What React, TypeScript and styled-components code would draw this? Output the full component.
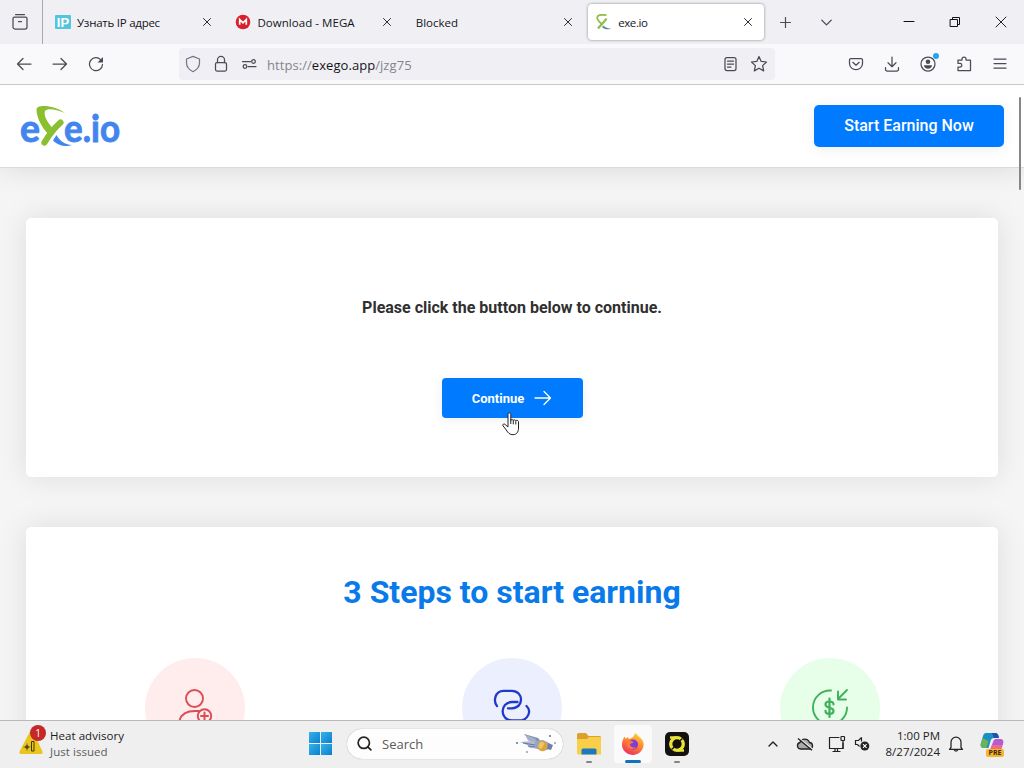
import React from 'react'
import styled, { createGlobalStyle } from 'styled-components';
import { X, ChevronDown, Search, ChevronUp, Plus } from 'lucide-react';


const tabs = [
  { title: 'Узнать IP адрес', icon: 'ip', spacing: '-0.25px' },
  { title: 'Download - MEGA', icon: 'mega', spacing: '0.05px' },
  { title: 'Blocked', icon: '', spacing: '0' },
  { title: 'exe.io', icon: 'exe', spacing: '-0.4px' },
]

const TabIcon = ({ name }: { name: string }) => {
  if (name === 'ip') {
    return (
      <Svg width="16" height="16" viewBox="0 0 16 16">
        <rect y="1" width="16" height="14" rx="1" fill="#55c5dc" />
        <text x="8" y="12.500" fontSize="13" fontWeight="700" fontFamily="Liberation Sans" fill="#fff" textAnchor="middle">IP</text>
      </Svg>
    )
  }
  if (name === 'mega') {
    return (
      <Svg width="16" height="16" viewBox="0 0 16 16">
        <circle cx="8" cy="8" r="7.300" fill="#d9202c" />
        <path d="M4.7 10.8V5.5L8 8.8l3.3-3.3v5.3" fill="none" stroke="#fff" strokeWidth="1.7" />
      </Svg>
    )
  }
  return (
    <Svg width="16" height="16" viewBox="0 0 16 16">
      <path d="M10.5 1.2C5 .2.5 1 1.3 4.2c.5 2.2 2.8 4.500 5.200 6.300" fill="none" stroke="#8fbd45" strokeWidth="1.7" />
      <path d="M10.500 4.500C8.500 8 5.500 10 2 14.500" fill="none" stroke="#8fbd45" strokeWidth="2.300" />
      <path d="M7.500 11.500c2 2.200 4.500 3 8 3.200-4 1.300-7.500.5-9.500-1.700z" fill="#5c86a8" />
    </Svg>
  )
}

const Logo = () => (
  <Svg width="104" height="58" viewBox="0 -6 104 58">
    <LogoText x="0" y="38.500" textLength="20">e</LogoText>
    <LogoText x="44" y="38.500" textLength="56">e.io</LogoText>
    <path d="M45 10C35 2.500 17 .5 16.500 6.500 16.500 14 21 23 27.500 30.500L32 24.500C26.500 18 23.500 12 25 8 27 4.800 36 6 45 10z" fill="#8abf2e" />
    <path d="M40.500 19.500C35.500 24 29.500 31 24.500 39.500" fill="none" stroke="#8abf33" strokeWidth="6.200" strokeLinecap="round" />
    <path d="M36.500 32c3.500 6 8 9.500 15.500 10-6 2.500-14.500.5-19-4.500z" fill="#4285ee" />
  </Svg>
)

const Shield = () => (
  <Line width="16" height="18" viewBox="0 0 16 18" stroke="#77758c">
    <path d="M8 1.300L14.500 4v3.800c0 4-2.500 7-6.500 8.900-4-1.900-6.500-4.900-6.500-8.900V4z" />
  </Line>
)

const Lock = () => (
  <Line width="16" height="18" viewBox="0 0 16 18">
    <rect x="2.500" y="7.500" width="11" height="8.500" rx="1.500" />
    <path d="M4.500 7.500V4.800a3.500 3.500 0 0 1 7 0v2.700" />
  </Line>
)

const Permissions = () => (
  <Line width="16" height="14" viewBox="0 0 16 14">
    <path d="M1.500 4.500h8M7 9.500h8" />
    <circle cx="12.500" cy="4.500" r="1.800" />
    <circle cx="4" cy="9.500" r="1.800" />
  </Line>
)

const Dollar = () => (
  <Line width="40" height="40" viewBox="0 0 40 40" stroke="#3eb15a" strokeWidth="1.900">
    <path d="M21 3.500A17 17 0 1 0 37 20.500" />
    <path d="M37 3l-9 9M28 4.500V12.500h8" />
    <path d="M23.500 17.500c0-2-1.700-3-4-3s-4 1.100-4 3.100c0 4.300 8 2 8 6.200 0 2-1.700 3.200-4 3.200s-4-1.200-4-3.200M19.500 11.500v18.500" strokeWidth="2.200" />
  </Line>
)

const Links = () => (
  <Line width="40" height="40" viewBox="0 0 40 40" stroke="#2039c8" strokeWidth="2.300">
    <path d="M5 19C1 14 3 4 11.500 3.800h8.500c11.500.2 12.500 17 0 17.500h-4" />
    <path d="M25.500 15h-5.500c-12.500.5-12.500 18 0 18.500h7c9 0 13-9.500 7.500-14.500" />
  </Line>
)

const UserPlus = () => (
  <Line width="40" height="40" viewBox="0 0 40 40" stroke="#dc4d53" strokeWidth="1.900">
    <circle cx="19.500" cy="11.500" r="8.500" />
    <path d="M4 36c1-8 7-12 16-12h4" />
    <circle cx="29.500" cy="29" r="6.700" />
    <path d="M29.500 25.500v7M26 29h7" strokeWidth="2" />
  </Line>
)

const App = () => {
  return (
    <Window>
      <GlobalStyle />
      <TabBar>
        <RecentView>
          <Line width="18" height="18" viewBox="0 0 18 18">
            <path d="M4.500 1.500h9" />
            <path d="M2 5.500a1.500 1.500 0 0 1 1.500-1.500h11A1.500 1.500 0 0 1 16 5.500V14a2 2 0 0 1-2 2H4a2 2 0 0 1-2-2zM7.500 8.500h3" />
          </Line>
        </RecentView>
        <Tabs>
          {tabs.map((tab) => (
            <Tab key={tab.title} $active={tab.icon === 'exe'}>
              {tab.icon && <TabIcon name={tab.icon} />}
              <TabTitle $spacing={tab.spacing}>{tab.title}</TabTitle>
              <X size={14} strokeWidth={1.7} color="#2b2a33" />
            </Tab>
          ))}
        </Tabs>
        <TabActions>
          <Plus size={17} strokeWidth={1.7} />
          <ChevronDown size={19} strokeWidth={1.7} />
        </TabActions>
        <Controls>
          <Line width="12" height="12" viewBox="0 0 12 12" stroke="#111" strokeWidth="1"><path d="M1 5.500h10" /></Line>
          <Line width="12" height="12" viewBox="0 0 12 12" stroke="#111" strokeWidth="1">
            <path d="M1.500 3.500h7v7h-7zM3.500 3.500v-2h7v7h-2" />
          </Line>
          <Line width="12" height="12" viewBox="0 0 12 12" stroke="#222" strokeWidth="1"><path d="M1 1l10 10M11 1L1 11" /></Line>
        </Controls>
      </TabBar>

      <Toolbar>
        <NavButtons>
          <Line width="16" height="16" viewBox="0 0 16 16"><path d="M15 8H1.500M7 2.500L1.500 8 7 13.500" /></Line>
          <Line width="16" height="16" viewBox="0 0 16 16"><path d="M1 8h13.500M9 2.500L14.500 8 9 13.500" /></Line>
          <Line width="16" height="16" viewBox="0 0 16 16">
            <path d="M14.500 8.500A6.500 6.500 0 1 1 12.800 3.800" />
            <path d="M15 1v5.500H9.500z" fill="#4b4a55" stroke="none" />
          </Line>
        </NavButtons>
        <UrlBar>
          <UrlIcons>
            <Shield />
            <Lock />
            <Permissions />
          </UrlIcons>
          <Url>https://<b>exego.app</b>/jzg75</Url>
          <UrlIcons>
            <Line width="16" height="16" viewBox="0 0 16 16">
              <rect x="3" y="1.500" width="11" height="13" rx="2" />
              <path d="M5.500 5h6M5.500 8h6M5.500 11h3.500" />
            </Line>
            <Line width="18" height="18" viewBox="0 0 18 18">
              <path d="M9 1.500l2.200 4.900 5.300.6-3.900 3.600 1.100 5.300L9 13.200l-4.700 2.700 1.100-5.300L1.500 7l5.300-.6z" />
            </Line>
          </UrlIcons>
        </UrlBar>
        <ToolIcons>
          <Line width="16" height="16" viewBox="0 0 16 16">
            <path d="M3 2.500h10a1.500 1.500 0 0 1 1.500 1.500V7.500a6.500 6.200 0 0 1-13 0V4A1.500 1.500 0 0 1 3 2.500zM4.800 6.300L8 9.200l3.200-2.900" />
          </Line>
          <Line width="16" height="16" viewBox="0 0 16 16">
            <path d="M8 1v9.500M4 6.800l4 3.900 4-3.900M1.500 11.500v1.700a1.800 1.800 0 0 0 1.800 1.800h9.400a1.800 1.800 0 0 0 1.800-1.800v-1.700" />
          </Line>
          <Account>
            <Line width="16" height="16" viewBox="0 0 16 16">
              <circle cx="8" cy="8" r="7" />
              <circle cx="8" cy="5.800" r="2.300" fill="#4b4a55" stroke="none" />
              <path d="M4 9.300h8c0 2.200-1.800 3.500-4 3.500s-4-1.300-4-3.500z" fill="#4b4a55" stroke="none" />
            </Line>
            <AccountDot />
          </Account>
          <Line width="16" height="16" viewBox="0 0 16 16">
            <path d="M6 4V3a2 2 0 0 1 4 0v1h4.500v10.500H2V11h2a1.800 1.800 0 0 0 0-3.600H2V4z" />
          </Line>
          <Line width="16" height="16" viewBox="0 0 16 16"><path d="M2 3h12M2 7.500h12M2 12h12" /></Line>
        </ToolIcons>
      </Toolbar>

      <Page>
        <Header>
          <Logo />
          <EarnButton>Start Earning Now</EarnButton>
        </Header>
        <Cards>
          <Card>
            <Notice>Please click the button below to continue.</Notice>
            <ContinueButton>
              Continue
              <Line width="18" height="16" viewBox="0 0 18 16" stroke="#fff" strokeWidth="1.300">
                <path d="M1 8h15.500M10 1.500L16.500 8 10 14.500" />
              </Line>
              <Cursor width="18" height="24" viewBox="0 0 18 24">
                <path d="M6 14V2.500c0-2 2.800-2 2.800 0V8.500c0-1.500 2.500-1.300 2.500.3 0-1.400 2.500-1.200 2.500.4 0-1.300 2.700-1.100 2.700.6V16c0 4-2 6.700-5.500 6.700-3.300 0-5-1.700-6.700-4.700L1 13.800c-.8-1.500 1-2.500 2.200-1.300L6 15z" fill="#fff" stroke="#222" />
                <path d="M8.800 8v4M11.300 9v3.300M13.800 9.500v3" stroke="#222" />
              </Cursor>
            </ContinueButton>
          </Card>
          <Card>
            <Title>3 Steps to start earning</Title>
            <Steps>
              <Circle $color="#ffecec"><UserPlus /></Circle>
              <Circle $color="#eceffe"><Links /></Circle>
              <Circle $color="#e7ffe9"><Dollar /></Circle>
            </Steps>
          </Card>
        </Cards>
        <ScrollThumb />
      </Page>

      <Taskbar>
        <Weather>
          <WeatherIcon>
            <Svg width="26" height="26" viewBox="0 0 26 26">
              <path d="M12 2.500c.8-1.300 2.200-1.300 3 0l9.500 20c.5 1.400 0 2.500-1.500 2.500H3c-1.500 0-2-1.100-1.500-2.500z" fill="#e9c51e" />
              <circle cx="9" cy="18" r="1.800" fill="#403611" />
              <path d="M5.500 18h7M9 14.500v7" stroke="#5c4c12" strokeWidth=".8" />
              <path d="M13.500 12.500v9.500h2.500v-9.500z" fill="#e9c51e" stroke="#403611" />
            </Svg>
            <Badge>1</Badge>
          </WeatherIcon>
          <WeatherText>
            <p>Heat advisory</p>
            <span>Just issued</span>
          </WeatherText>
        </Weather>
        <StartButton>
          <i /><i /><i /><i />
        </StartButton>
        <SearchBox>
          <Search size={17} strokeWidth={2.4} color="#222" />
          <span>Search</span>
          <Svg width="42" height="24" viewBox="0 0 42 24">
            <path d="M9 2l14 4 5 6-12-2z" fill="#7d8db0" />
            <path d="M10 2.500l3 6 10 2-3-4z" fill="#a4b0cb" />
            <path d="M5 10l12-1 12 3-4 5-10-1-3-3z" fill="#b2bbd0" />
            <path d="M8 11l12 2M13 14l8 1" stroke="#66779c" />
            <path d="M20 9l8-1 6 3 3 5-9 3-8-3z" fill="#98a6c4" />
            <path d="M25 9.500c3-1.500 6 0 7 2.500s0 6-3 7-6-1-6-4 0-4.500 2-5.500z" fill="#d9a63c" />
            <path d="M25 10.500c1.500-1 3.500-.5 4.500 1l-3 5.500c-2-.5-3-2-3-3.500z" fill="#edc765" />
            <path d="M33 11l5 2-2 5-4-1z" fill="#6f81a8" />
            <circle cx="35" cy="4" r="1" fill="#59709d" />
            <circle cx="2" cy="11" r="1" fill="#59709d" />
            <circle cx="12" cy="20" r="1" fill="#8c9bb9" />
            <circle cx="40" cy="11" r="1" fill="#8c9bb9" />
          </Svg>
        </SearchBox>
        <Apps>
          <AppSlot>
            <Svg width="26" height="24" viewBox="0 0 26 24">
              <path d="M1 2.500A1.500 1.500 0 0 1 2.500 1H10l2.500 3H23.500A1.500 1.500 0 0 1 25 5.500V21H1z" fill="#dca02c" />
              <path d="M1 7h10l2-2h10.500A1.500 1.500 0 0 1 25 6.500V22.500H2.500A1.500 1.500 0 0 1 1 21z" fill="#f9ce48" />
              <path d="M5.500 22.500v-4.500a1.500 1.500 0 0 1 1.500-1.500h12a1.500 1.500 0 0 1 1.500 1.500v4.500z" fill="#1c79bd" />
            </Svg>
            <Running />
          </AppSlot>
          <AppSlot $active>
            <Svg width="24" height="24" viewBox="0 0 24 24">
              <defs>
                <linearGradient id="fox" x1=".8" y1="0" x2=".3" y2="1">
                  <stop offset="0" stopColor="#ffd83a" />
                  <stop offset=".45" stopColor="#ff8a2c" />
                  <stop offset="1" stopColor="#ed2c65" />
                </linearGradient>
              </defs>
              <path d="M14 1c3 2 4 4 5.500 5 2.500 2 3.500 5 3 8-.8 5-5.500 9-10.500 9S1.300 19 1 13.500C.8 10 2 7 3.500 4.500l1 2.500 2-2 1.500 2c3-.5 5.500-2.500 6-6z" fill="url(#fox)" />
              <circle cx="12" cy="12.500" r="5" fill="#803bdb" />
              <path d="M6 9c3-.5 6-.5 6.500 1.500L9 12c0 3 3 4 6 3-2 3-8 2.500-9-2z" fill="#ff7a32" />
            </Svg>
            <Running $active />
          </AppSlot>
          <AppSlot>
            <Svg width="24" height="24" viewBox="0 0 24 24">
              <rect width="24" height="24" rx="5" fill="#15110f" />
              <circle cx="12" cy="12" r="6.300" fill="none" stroke="#e8e438" strokeWidth="3.300" />
              <path d="M5 5.500h6M19 18.500h-6" stroke="#e8e438" strokeWidth="2.500" />
              <path d="M6.500 17.500l3.500-3M17.500 6.500l-3.500 3" stroke="#15110f" strokeWidth="1.400" />
            </Svg>
            <Running />
          </AppSlot>
        </Apps>
        <Tray>
          <ChevronUp size={16} strokeWidth={2} />
          <Svg width="18" height="14" viewBox="0 0 18 14">
            <path d="M4.500 12a3.300 3.300 0 0 1-.5-6.500 5 5 0 0 1 9.500 0A3.300 3.300 0 0 1 14 12z" fill="#aaa" stroke="#222" strokeWidth="1.300" />
            <path d="M3 1L17 12.500" stroke="#efefef" strokeWidth="1.300" />
            <path d="M2 1.500L16 13.300" stroke="#222" strokeWidth="1.300" />
          </Svg>
          <Line width="18" height="18" viewBox="0 0 18 18" stroke="#222" strokeWidth="1.200">
            <path d="M11 2.500H1.500v11H15V8M5 16.500h7M7 13.500v3M9.500 13.500v3" />
            <rect x="13" y="1.500" width="3.500" height="4" rx=".5" />
            <path d="M15 5.500v8" />
          </Line>
          <Svg width="16" height="16" viewBox="0 0 16 16">
            <path d="M7.500 1.500L4.500 4.500H1.500v4h2l2 2" fill="none" stroke="#222" strokeWidth="1.200" />
            <path d="M7.500 1.500v4" stroke="#222" strokeWidth="1.200" />
            <circle cx="10.800" cy="10" r="4.500" fill="#222" />
            <path d="M9 8.200l3.600 3.600M12.600 8.200L9 11.800" stroke="#fff" strokeWidth="1.100" />
          </Svg>
          <Clock>
            <span>1:00 PM</span>
            <span>8/27/2024</span>
          </Clock>
          <Line width="16" height="18" viewBox="0 0 16 18" stroke="#222">
            <path d="M3 12.500V7.200a5 5 0 0 1 10 0v5.300l1.500 1.800h-13zM6.200 14.500c.3 2 3.300 2 3.600 0" />
          </Line>
          <Copilot>
            <Svg width="24" height="24" viewBox="0 0 24 24">
              <path d="M6 1h9c2 0 3 1 3.500 3l.5 2h-5c-2 0-3 1-3.500 3l-2 7H4c-3 0-4-2-3-5l2-7c.5-2 1.500-3 3-3z" fill="#1b8fc3" />
              <path d="M1 11l1.500-5 6 3-2 7H4c-3 0-4-2-3-5z" fill="#68b45a" />
              <path d="M15 1c2 0 3 1 3.500 3l.5 2h-5l-2-5z" fill="#2450a8" />
              <path d="M16 7h4c3 0 4 2 3 5l-2 6H10l3-8c.5-2 1.500-3 3-3z" fill="#b45bd5" />
              <path d="M10 18l2-5h10l-1 5z" fill="#ee6d86" />
            </Svg>
            <Pre>PRE</Pre>
          </Copilot>
        </Tray>
      </Taskbar>
    </Window>
  )
}

export default App;

const GlobalStyle = createGlobalStyle`
* {
  box-sizing: border-box;
}
body {
  margin: 0;
  overflow: hidden;
}
p {
  margin: 0;
}
`

const Svg = styled.svg`
display: block;
flex-shrink: 0;
`

const Line = styled(Svg).attrs<{ stroke?: string; strokeWidth?: string }>((p) => ({
  fill: 'none',
  stroke: p.stroke || '#4b4a55',
  strokeWidth: p.strokeWidth || '1.25',
  strokeLinecap: 'round',
  strokeLinejoin: 'round',
}))``

const LogoText = styled.text.attrs({ lengthAdjust: 'spacingAndGlyphs' })`
font-family: Lato, sans-serif;
font-size: 38px;
font-weight: 700;
fill: #4285ee;
stroke: #4285ee;
stroke-width: 0.9px;
`

const Window = styled.div`
width: 1024px;
height: 768px;
display: flex;
flex-direction: column;
overflow: hidden;
font-family: "Open Sans", "Noto Sans", sans-serif;
color: #15141a;
`

const TabBar = styled.div`
height: 44px;
flex-shrink: 0;
display: flex;
align-items: center;
background-color: #f0f0f4;
`

const RecentView = styled.div`
width: 43px;
height: 44px;
padding-right: 2px;
display: flex;
justify-content: center;
align-items: center;
border-right: 1px solid #a9a9b2;
`

const Tabs = styled.div`
display: flex;
gap: 4.4px;
margin-left: 4px;
`

const Tab = styled.div<{ $active: boolean }>`
width: 176px;
height: 36px;
padding: 0 9px 0 8px;
display: flex;
align-items: center;
gap: 6px;
border-radius: 4px;
background-color: ${(p) => (p.$active ? '#fff' : 'transparent')};
box-shadow: ${(p) => (p.$active ? '0 0 3px rgba(0, 0, 0, 0.45)' : 'none')};
`

const TabTitle = styled.span<{ $spacing: string }>`
flex: 1;
font-size: 11.5px;
white-space: nowrap;
letter-spacing: ${(p) => p.$spacing};
`

const TabActions = styled.div`
margin-left: 13px;
display: flex;
align-items: center;
gap: 23px;
color: #4b4a55;
`

const Controls = styled.div`
margin-left: auto;
display: flex;
gap: 34px;
padding-right: 17px;
`

const Toolbar = styled.div`
height: 41px;
flex-shrink: 0;
display: flex;
align-items: center;
background-color: #f9f9fb;
border-bottom: 1px solid #c8c8cc;
`

const NavButtons = styled.div`
width: 179px;
padding-left: 16px;
display: flex;
gap: 20px;
`

const UrlBar = styled.div`
width: 596px;
height: 32px;
padding: 0 7px 0 6px;
display: flex;
align-items: center;
background-color: #f0f0f4;
border-radius: 4px;
`

const UrlIcons = styled.div`
display: flex;
align-items: center;
gap: 12px;
`

const Url = styled.div`
flex: 1;
margin-left: 10px;
padding-top: 2px;
font-size: 13px;
letter-spacing: 0.06px;
color: #85848c;
b {
  font-weight: 400;
  color: #15141a;
}
`

const ToolIcons = styled.div`
flex: 1;
display: flex;
align-items: center;
justify-content: flex-end;
gap: 20px;
padding-right: 16px;
`

const Account = styled.div`
position: relative;
`

const AccountDot = styled.div`
position: absolute;
top: -3px;
right: -3px;
width: 6px;
height: 6px;
border-radius: 50%;
background-color: #21a6ee;
`

const Page = styled.div`
position: relative;
flex: 1;
min-height: 0;
overflow: hidden;
background-color: #f5f5f5;
font-family: Roboto, sans-serif;
`

const Header = styled.div`
height: 83px;
padding: 0 20px;
display: flex;
justify-content: space-between;
align-items: center;
background-color: #fff;
border-bottom: 1px solid #dadada;
box-shadow: 0 0 30px rgba(0, 0, 0, 0.12);
`

const EarnButton = styled.button`
width: 190px;
height: 42px;
padding: 0 0 2px;
border: none;
border-radius: 5px;
background-color: #007bff;
box-shadow: 0 2px 14px rgba(0, 0, 0, 0.07);
font-family: Roboto, sans-serif;
font-size: 16px;
font-weight: 500;
color: #fff;
`

const Cards = styled.div`
padding: 50px 26px 0;
display: flex;
flex-direction: column;
gap: 50px;
`

const Card = styled.div`
height: 259px;
display: flex;
flex-direction: column;
align-items: center;
background-color: #fff;
border-radius: 5px;
box-shadow: 0 0 30px rgba(0, 0, 0, 0.1);
`

const Notice = styled.p`
margin-top: 80px;
font-size: 16px;
line-height: 20px;
font-weight: 700;
color: #303030;
`

const ContinueButton = styled.button`
position: relative;
width: 141px;
height: 40px;
margin-top: 60px;
padding: 0;
display: flex;
justify-content: center;
align-items: center;
gap: 10px;
border: none;
border-radius: 4px;
background-color: #007bff;
box-shadow: 0 2px 12px rgba(0, 0, 0, 0.07);
font-family: Roboto, sans-serif;
font-size: 13px;
font-weight: 700;
color: #fff;
`

const Cursor = styled(Svg)`
position: absolute;
left: 60px;
top: 34px;
`

const Title = styled.h2`
margin: 45px 0 0;
font-size: 32px;
line-height: 40px;
font-weight: 700;
color: #087ae9;
`

const Steps = styled.div`
width: 735px;
margin-top: 46px;
display: flex;
justify-content: space-between;
`

const Circle = styled.div<{ $color: string }>`
width: 100px;
height: 100px;
padding-bottom: 2px;
display: flex;
justify-content: center;
align-items: center;
border-radius: 50%;
background-color: ${(p) => p.$color};
`

const ScrollThumb = styled.div`
position: absolute;
top: 12px;
right: 3px;
width: 2px;
height: 93px;
border-radius: 1px;
background-color: #85858a;
`

const Taskbar = styled.div`
height: 48px;
flex-shrink: 0;
padding-bottom: 2px;
display: flex;
align-items: center;
background-color: #efefef;
border-top: 1px solid #b8b8b8;
`

const Weather = styled.div`
width: 309px;
padding-left: 18px;
display: flex;
align-items: center;
`

const WeatherIcon = styled.div`
position: relative;
margin-top: -4px;
`

const Badge = styled.div`
position: absolute;
left: 12px;
top: -4px;
width: 16px;
height: 16px;
border-radius: 50%;
background-color: #c62828;
font-size: 10px;
line-height: 16px;
text-align: center;
color: #fff;
`

const WeatherText = styled.div`
margin-left: 6px;
font-size: 11.5px;
line-height: 16px;
letter-spacing: 0.05px;
color: #1b1b1b;
span {
  color: #5c5c5c;
}
`

const StartButton = styled.div`
width: 23px;
height: 23px;
display: grid;
grid-template-columns: 1fr 1fr;
gap: 1px;
i {
  background: linear-gradient(135deg, #35b3ea, #0a7fd0);
}
`

const SearchBox = styled.div`
width: 216px;
height: 30px;
margin-left: 15px;
padding: 0 6px 0 9px;
display: flex;
align-items: center;
border-radius: 15px;
background-color: #fdfdfd;
box-shadow: 0 0 1px rgba(0, 0, 0, 0.4);
span {
  flex: 1;
  margin-left: 9px;
  font-size: 13px;
  color: #5a5a5a;
}
`

const Apps = styled.div`
display: flex;
gap: 6px;
margin-left: 7px;
`

const AppSlot = styled.div<{ $active?: boolean }>`
position: relative;
width: 38px;
height: 38px;
display: flex;
justify-content: center;
align-items: center;
border-radius: 4px;
background-color: ${(p) => (p.$active ? '#fafafa' : 'transparent')};
`

const Running = styled.div<{ $active?: boolean }>`
position: absolute;
bottom: 0;
width: ${(p) => (p.$active ? 16 : 6)}px;
height: ${(p) => (p.$active ? 3 : 2)}px;
border-radius: 2px;
background-color: ${(p) => (p.$active ? '#0f72bd' : '#858585')};
`

const Tray = styled.div`
margin-left: auto;
padding-right: 20px;
display: flex;
align-items: center;
color: #222;
> svg:nth-child(2) { margin-left: 15px; }
> svg:nth-child(3) { margin-left: 14px; }
> svg:nth-child(4) { margin-left: 8px; }
`

const Clock = styled.div`
width: 70px;
margin-right: 8px;
display: flex;
flex-direction: column;
align-items: flex-end;
font-size: 11.5px;
line-height: 16px;
`

const Copilot = styled.div`
position: relative;
margin-left: 16px;
`

const Pre = styled.div`
position: absolute;
left: 6px;
bottom: -1px;
width: 18px;
height: 8px;
border-radius: 2px;
background-color: #f6b52f;
font-size: 7px;
line-height: 8px;
font-weight: 700;
text-align: center;
color: #3d2a08;
`
